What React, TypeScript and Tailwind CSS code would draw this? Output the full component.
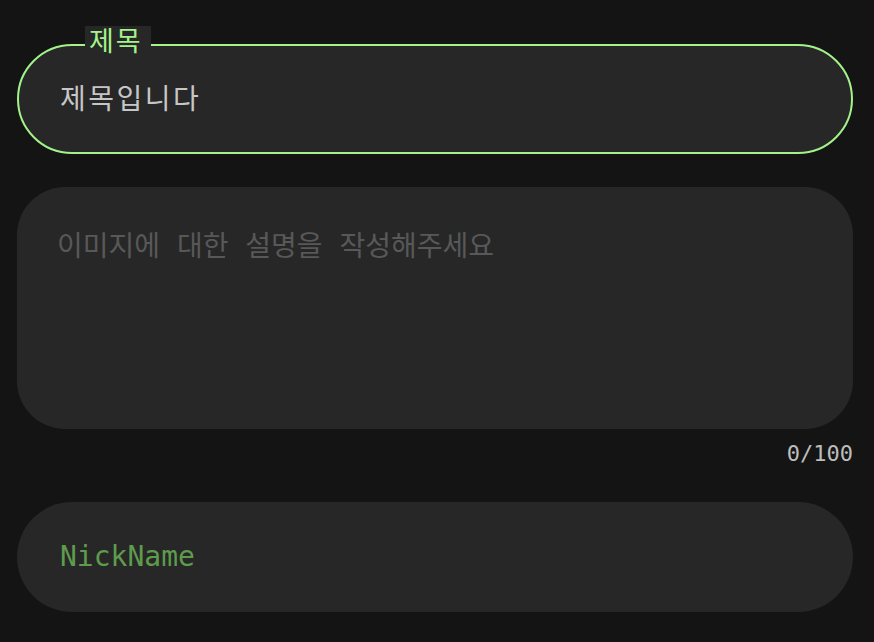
import { useState } from 'react';

const FONT = { fontFamily: '"DejaVu Sans Mono", "Noto Sans CJK KR", monospace' };

export default function App() {
  const [title, setTitle] = useState('제목입니다');
  const [desc, setDesc] = useState('');

  return (
    <div className="min-h-screen w-full bg-[#141414] pl-[17px] pr-[21px] pt-[44px]" style={FONT}>
      {/* Title field */}
      <div className="relative h-[110px] rounded-full border-2 border-[#a3f38a] bg-[#272727]">
        <span className="absolute left-[66px] top-[-20px] bg-[#272727] pl-[4px] pr-[8px] text-[27px] leading-[32px] tracking-[2px] text-[#a3f38a]">
          제목
        </span>
        <input
          value={title}
          onChange={(e) => setTitle(e.target.value)}
          className="h-full w-full bg-transparent pb-[4px] pl-[41px] pr-[41px] text-[28px] tracking-[2.5px] text-[#c6c6c6] outline-none"
          style={FONT}
        />
      </div>

      {/* Description */}
      <div className="mt-[33px]">
        <textarea
          value={desc}
          onChange={(e) => setDesc(e.target.value.slice(0, 100))}
          placeholder="이미지에 대한 설명을 작성해주세요"
          className="block h-[242px] w-full resize-none rounded-[48px] bg-[#272727] pl-[40px] pr-[43px] pt-[42px] text-[28px] leading-[36px] text-[#c6c6c6] outline-none placeholder:text-[#585858]"
          style={FONT}
        />
        <div className="mt-[10px] h-[30px] text-right text-[22px] leading-[30px] text-[#bdbdbd]">
          {desc.length}/100
        </div>
      </div>

      {/* Nickname */}
      <div className="mt-[33px] flex h-[110px] items-center rounded-full bg-[#272727] pl-[43px]">
        <span className="text-[28px] text-[#5e9b4d]">NickName</span>
      </div>
    </div>
  );
}
